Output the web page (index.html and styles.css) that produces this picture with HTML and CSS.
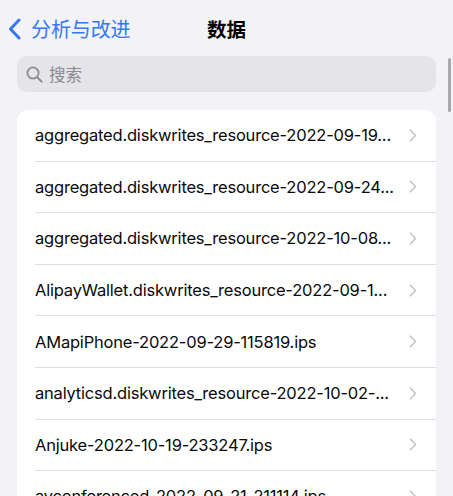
FILE: index.html
```html
<!DOCTYPE html>
<html lang="zh">
<head>
<meta charset="utf-8">
<link rel="stylesheet" href="styles.css">
</head>
<body>
<div class="screen">
  <header class="nav">
    <a class="back">
      <svg class="back-icon" width="13" height="22" viewBox="0 0 13 22"><path d="M11 2 L2.5 11 L11 20" fill="none" stroke="#3478f6" stroke-width="3" stroke-linecap="round" stroke-linejoin="round"/></svg>
      <span class="back-label">分析与改进</span>
    </a>
    <h1 class="title">数据</h1>
  </header>
  <div class="search">
    <svg class="search-icon" width="17" height="17" viewBox="0 0 17 17"><circle cx="7" cy="7" r="5.6" fill="none" stroke="#8a8a8f" stroke-width="1.7"/><path d="M11.2 11.2 L15.6 15.6" stroke="#8a8a8f" stroke-width="2" stroke-linecap="round"/></svg>
    <span class="search-text">搜索</span>
  </div>
  <div class="scrollbar"></div>
  <ul class="list">
    <li class="row"><span class="name">aggregated.diskwrites_resource-2022-09-19...</span><svg class="chev" width="8" height="13" viewBox="0 0 8 13"><path d="M1.5 1.2 L6.5 6.5 L1.5 11.8" fill="none" stroke="#c4c4c7" stroke-width="1.6" stroke-linecap="round" stroke-linejoin="round"/></svg></li>
    <li class="row"><span class="name">aggregated.diskwrites_resource-2022-09-24...</span><svg class="chev" width="8" height="13" viewBox="0 0 8 13"><path d="M1.5 1.2 L6.5 6.5 L1.5 11.8" fill="none" stroke="#c4c4c7" stroke-width="1.6" stroke-linecap="round" stroke-linejoin="round"/></svg></li>
    <li class="row"><span class="name">aggregated.diskwrites_resource-2022-10-08...</span><svg class="chev" width="8" height="13" viewBox="0 0 8 13"><path d="M1.5 1.2 L6.5 6.5 L1.5 11.8" fill="none" stroke="#c4c4c7" stroke-width="1.6" stroke-linecap="round" stroke-linejoin="round"/></svg></li>
    <li class="row"><span class="name">AlipayWallet.diskwrites_resource-2022-09-1...</span><svg class="chev" width="8" height="13" viewBox="0 0 8 13"><path d="M1.5 1.2 L6.5 6.5 L1.5 11.8" fill="none" stroke="#c4c4c7" stroke-width="1.6" stroke-linecap="round" stroke-linejoin="round"/></svg></li>
    <li class="row"><span class="name">AMapiPhone-2022-09-29-115819.ips</span><svg class="chev" width="8" height="13" viewBox="0 0 8 13"><path d="M1.5 1.2 L6.5 6.5 L1.5 11.8" fill="none" stroke="#c4c4c7" stroke-width="1.6" stroke-linecap="round" stroke-linejoin="round"/></svg></li>
    <li class="row"><span class="name">analyticsd.diskwrites_resource-2022-10-02-...</span><svg class="chev" width="8" height="13" viewBox="0 0 8 13"><path d="M1.5 1.2 L6.5 6.5 L1.5 11.8" fill="none" stroke="#c4c4c7" stroke-width="1.6" stroke-linecap="round" stroke-linejoin="round"/></svg></li>
    <li class="row"><span class="name">Anjuke-2022-10-19-233247.ips</span><svg class="chev" width="8" height="13" viewBox="0 0 8 13"><path d="M1.5 1.2 L6.5 6.5 L1.5 11.8" fill="none" stroke="#c4c4c7" stroke-width="1.6" stroke-linecap="round" stroke-linejoin="round"/></svg></li>
    <li class="row"><span class="name">avconferenced-2022-09-21-211114.ips</span><svg class="chev" width="8" height="13" viewBox="0 0 8 13"><path d="M1.5 1.2 L6.5 6.5 L1.5 11.8" fill="none" stroke="#c4c4c7" stroke-width="1.6" stroke-linecap="round" stroke-linejoin="round"/></svg></li>
  </ul>
</div>
</body>
</html>
```
FILE: styles.css
```css
* { box-sizing: border-box; }
html, body { margin: 0; padding: 0; }
body {
  background: #f2f2f7;
  font-family: "Inter", "Noto Sans CJK SC", sans-serif;
  color: #000;
  overflow: hidden;
  height: 496px;
}
.screen {
  position: relative;
  padding: 0 17px;
}
.nav {
  height: 56px;
  display: flex;
  align-items: center;
  position: relative;
  padding-top: 2px;
}
.back {
  display: flex;
  align-items: center;
  margin-left: -9px;
  gap: 10px;
  color: #3478f6;
}
.back-label {
  font-family: "Noto Sans CJK SC", sans-serif;
  font-size: 20px;
  line-height: 24px;
  letter-spacing: -0.1px;
}
.title {
  position: absolute;
  left: 50%;
  top: 1px;
  margin: 0;
  transform: translateX(-50%);
  font-family: "Noto Sans CJK SC", sans-serif;
  font-size: 19.5px;
  font-weight: 700;
  line-height: 56px;
}
.search {
  height: 36px;
  background: #e4e4e9;
  border-radius: 10px;
  display: flex;
  align-items: center;
  padding-left: 9px;
  gap: 6px;
}
.search-text {
  font-family: "Noto Sans CJK SC", sans-serif;
  font-size: 16.5px;
  color: #8a8a8f;
  line-height: 20px;
}
.scrollbar {
  position: absolute;
  right: 2px;
  top: 58px;
  width: 3px;
  height: 54px;
  border-radius: 2px;
  background: #a9a9ad;
}
.list {
  list-style: none;
  margin: 18px 0 0;
  padding: 0 0 0 18px;
  background: #fff;
  border-radius: 11px;
}
.row {
  height: 51.6px;
  display: flex;
  align-items: center;
  border-bottom: 1px solid #dedee2;
  padding-right: 19px;
}
.name {
  flex: 1;
  font-size: 16.5px;
  letter-spacing: -0.2px;
  white-space: nowrap;
  overflow: hidden;
  color: #0a0a0a;
}
.chev {
  flex: none;
}
```
